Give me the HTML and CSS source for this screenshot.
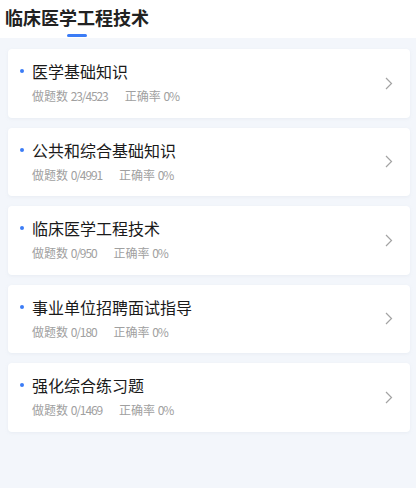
FILE: index.html
```html
<!DOCTYPE html>
<html lang="zh-cn">

<head>
    <meta charset="UTF-8">
    <meta name="viewport" content="width=device-width, initial-scale=1.0">
    <title>临床医学工程技术</title>
    <link rel="stylesheet" href="styles.css">
</head>

<body>
    <div class="header">
        <div class="tab">
            <span class="tab-title">临床医学工程技术</span>
            <span class="tab-line"></span>
        </div>
    </div>
    <div class="list">
        <div class="item">
            <div class="info">
                <p class="name"><i class="dot"></i>医学基础知识</p>
                <p class="stat"><span>做题数 <b>23/4523</b></span><span>正确率 <b>0%</b></span></p>
            </div>
            <svg class="arrow" width="8" height="13" viewBox="0 0 8 13"><polyline points="1,1 6.5,6.5 1,12" fill="none" stroke="#a3a3a3" stroke-width="1.2"/></svg>
        </div>
        <div class="item">
            <div class="info">
                <p class="name"><i class="dot"></i>公共和综合基础知识</p>
                <p class="stat"><span>做题数 <b>0/4991</b></span><span>正确率 <b>0%</b></span></p>
            </div>
            <svg class="arrow" width="8" height="13" viewBox="0 0 8 13"><polyline points="1,1 6.5,6.5 1,12" fill="none" stroke="#a3a3a3" stroke-width="1.2"/></svg>
        </div>
        <div class="item">
            <div class="info">
                <p class="name"><i class="dot"></i>临床医学工程技术</p>
                <p class="stat"><span>做题数 <b>0/950</b></span><span>正确率 <b>0%</b></span></p>
            </div>
            <svg class="arrow" width="8" height="13" viewBox="0 0 8 13"><polyline points="1,1 6.5,6.5 1,12" fill="none" stroke="#a3a3a3" stroke-width="1.2"/></svg>
        </div>
        <div class="item">
            <div class="info">
                <p class="name"><i class="dot"></i>事业单位招聘面试指导</p>
                <p class="stat"><span>做题数 <b>0/180</b></span><span>正确率 <b>0%</b></span></p>
            </div>
            <svg class="arrow" width="8" height="13" viewBox="0 0 8 13"><polyline points="1,1 6.5,6.5 1,12" fill="none" stroke="#a3a3a3" stroke-width="1.2"/></svg>
        </div>
        <div class="item">
            <div class="info">
                <p class="name"><i class="dot"></i>强化综合练习题</p>
                <p class="stat"><span>做题数 <b>0/1469</b></span><span>正确率 <b>0%</b></span></p>
            </div>
            <svg class="arrow" width="8" height="13" viewBox="0 0 8 13"><polyline points="1,1 6.5,6.5 1,12" fill="none" stroke="#a3a3a3" stroke-width="1.2"/></svg>
        </div>
    </div>
</body>

</html>
```

FILE: styles.css
```css
html,
body {
    margin: 0;
    height: 100%;
    background-color: #f3f6fb;
    font-family: "Noto Sans CJK SC", "Noto Sans", sans-serif;
}

p {
    margin: 0;
}

.header {
    background-color: #fff;
    padding: 4px 5px 1px;
}

.tab {
    display: inline-flex;
    flex-direction: column;
    align-items: center;
}

.tab-title {
    font-size: 18px;
    line-height: 27px;
    font-weight: bold;
    color: #222;
}

.tab-line {
    width: 20px;
    height: 3px;
    margin-top: 3px;
    border-radius: 2px;
    background-color: #3b7cf6;
}

.list {
    padding: 11px 6px 0 8px;
}

.item {
    box-sizing: border-box;
    height: 68.5px;
    margin-bottom: 10px;
    padding: 11px 17px 0 12px;
    background-color: #fff;
    border-radius: 4px;
    box-shadow: 0 1px 3px rgba(200, 210, 225, .25);
    display: flex;
    align-items: flex-start;
}

.info {
    flex: 1;
}

.name {
    font-size: 16px;
    line-height: 22px;
    color: #1a1a1a;
    display: flex;
    align-items: center;
}

.dot {
    width: 4px;
    height: 4px;
    border-radius: 50%;
    background-color: #3b7cf6;
    margin-right: 8px;
}

.stat {
    margin-top: 5px;
    padding-left: 12px;
    font-size: 12px;
    line-height: 18px;
    color: #a0a0a0;
}

.stat b {
    font-weight: normal;
    letter-spacing: -1.1px;
}

.stat span+span {
    margin-left: 17px;
}

.arrow {
    align-self: center;
    margin-top: -11px;
}
```
